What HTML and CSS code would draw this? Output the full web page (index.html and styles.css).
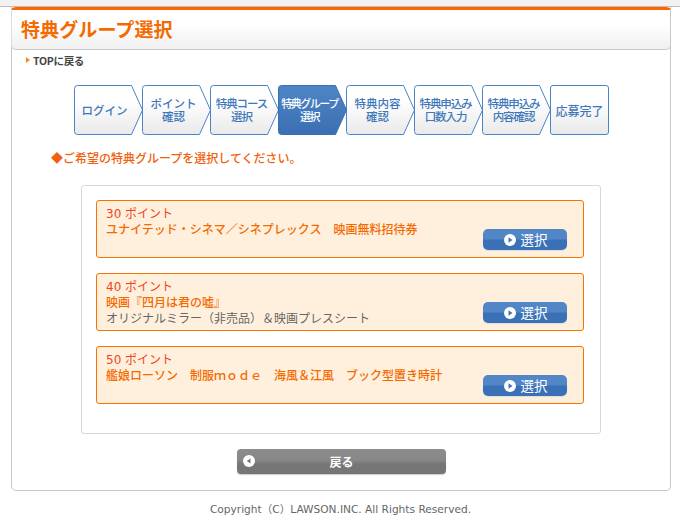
FILE: index.html
```html
<!DOCTYPE html>
<html lang="ja">
<head>
<meta charset="utf-8">
<title>特典グループ選択</title>
<link rel="stylesheet" href="styles.css">
</head>
<body>
<div class="topband"></div>
<main class="card">
  <header class="head"><h1>特典グループ選択</h1></header>
  <a class="toplink"><span class="tri"></span>TOPに戻る</a>
  <ol class="steps">
    <li class="step first"><svg class="shape" viewBox="0 0 70 50"><defs><linearGradient id="g" x1="0" y1="0" x2="0" y2="1"><stop offset="0.3" stop-color="#fff"/><stop offset="1" stop-color="#e9e9e9"/></linearGradient><linearGradient id="b" x1="0" y1="0" x2="0" y2="1"><stop offset="0" stop-color="#4f85c5"/><stop offset="1" stop-color="#3a70b3"/></linearGradient></defs><path class="p" d="M3.500.5H57.500L68.500 25 57.500 49.500H3.500Q.500 49.500.500 46.500V3.500Q.500.500 3.500.500Z"/></svg><span>ログイン</span></li>
    <li class="step"><svg class="shape" viewBox="0 0 70 50"><path class="p" d="M3.500.5H57.500L68.500 25 57.500 49.500H3.500Q.500 49.500.500 46.500V3.500Q.500.500 3.500.500Z"/></svg><span>ポイント<br>確認</span></li>
    <li class="step tight"><svg class="shape" viewBox="0 0 70 50"><path class="p" d="M3.500.5H57.500L68.500 25 57.500 49.500H3.500Q.500 49.500.500 46.500V3.500Q.500.500 3.500.500Z"/></svg><span>特典コース<br>選択</span></li>
    <li class="step on"><svg class="shape" viewBox="0 0 70 50"><path class="p" d="M3.500.5H57.500L68.500 25 57.500 49.500H3.500Q.500 49.500.500 46.500V3.500Q.500.500 3.500.500Z"/></svg><span>特典グループ<br>選択</span></li>
    <li class="step"><svg class="shape" viewBox="0 0 70 50"><path class="p" d="M3.500.5H57.500L68.500 25 57.500 49.500H3.500Q.500 49.500.500 46.500V3.500Q.500.500 3.500.500Z"/></svg><span>特典内容<br>確認</span></li>
    <li class="step tight"><svg class="shape" viewBox="0 0 70 50"><path class="p" d="M3.500.5H57.500L68.500 25 57.500 49.500H3.500Q.500 49.500.500 46.500V3.500Q.500.500 3.500.500Z"/></svg><span>特典申込み<br>口数入力</span></li>
    <li class="step tight"><svg class="shape" viewBox="0 0 70 50"><path class="p" d="M3.500.5H57.500L68.500 25 57.500 49.500H3.500Q.500 49.500.500 46.500V3.500Q.500.500 3.500.500Z"/></svg><span>特典申込み<br>内容確認</span></li>
    <li class="step last"><span>応募完了</span></li>
  </ol>
  <p class="lead">◆ご希望の特典グループを選択してください。</p>
  <section class="panel">
    <article class="item">
      <div class="pt">30 ポイント</div>
      <div class="name">ユナイテッド・シネマ／シネプレックス　映画無料招待券</div>
      <a class="sel"><svg class="ic" viewBox="0 0 12 12"><circle cx="6" cy="6" r="6" fill="#fff"/><path d="M4.500 3.300 8.500 6 4.500 8.700Z" fill="#3f75b8"/></svg>選択</a>
    </article>
    <article class="item">
      <div class="pt">40 ポイント</div>
      <div class="name">映画『四月は君の嘘』</div>
      <div class="sub">オリジナルミラー（非売品）＆映画プレスシート</div>
      <a class="sel"><svg class="ic" viewBox="0 0 12 12"><circle cx="6" cy="6" r="6" fill="#fff"/><path d="M4.500 3.300 8.500 6 4.500 8.700Z" fill="#3f75b8"/></svg>選択</a>
    </article>
    <article class="item">
      <div class="pt">50 ポイント</div>
      <div class="name">艦娘ローソン　制服ｍｏｄｅ　海風＆江風　ブック型置き時計</div>
      <a class="sel"><svg class="ic" viewBox="0 0 12 12"><circle cx="6" cy="6" r="6" fill="#fff"/><path d="M4.500 3.300 8.500 6 4.500 8.700Z" fill="#3f75b8"/></svg>選択</a>
    </article>
  </section>
  <a class="back"><svg class="bic" viewBox="0 0 12 12"><circle cx="6" cy="6" r="6" fill="#fff"/><path d="M7.500 3.500 3.800 6 7.500 8.500Z" fill="#777"/></svg>戻る</a>
</main>
<footer class="foot">Copyright（C）LAWSON.INC. All Rights Reserved.</footer>
</body>
</html>
```
FILE: styles.css
```css
* { box-sizing: border-box; }
html, body { margin: 0; padding: 0; }
body {
  width: 680px;
  height: 521px;
  overflow: hidden;
  background: #fff;
  font-family: "Noto Sans CJK JP", "Noto Sans", sans-serif;
  font-size: 12px;
  color: #555;
}
.topband { height: 7px; background: #f1f1f1; border-bottom: 1px solid #bdbdbd; }
.card {
  width: 660px;
  height: 484px;
  margin: 0 0 0 11px;
  border: 1px solid #c8c8c8;
  border-top: 0;
  border-radius: 0 0 5px 5px;
  display: flex;
  flex-direction: column;
  background: #fff;
}
.head {
  height: 43px;
  margin: 0 -1px;
  border-top: 3px solid #f60;
  border-bottom: 1px solid #c8c8c8;
  border-left: 1px solid #ddd;
  border-right: 1px solid #c8c8c8;
  border-radius: 5px 5px 5px 5px / 3px 3px 5px 5px;
  background: linear-gradient(#fff 35%, #f0f0f0);
  display: flex;
  align-items: center;
  padding-left: 9px;
}
.head h1 {
  margin: 0 0 1px;
  font-size: 19px;
  letter-spacing: 0.100px;
  line-height: 24px;
  font-weight: 700;
  color: #f46a00;
}
.toplink {
  display: flex;
  align-items: center;
  height: 20px;
  margin-left: 14px;
  font-size: 10.500px;
  font-weight: 700;
  letter-spacing: -0.300px;
  color: #444;
}
.tri {
  width: 0;
  height: 0;
  margin-right: 3px;
  border-left: 4px solid #f58a1f;
  border-top: 3px solid transparent;
  border-bottom: 3px solid transparent;
}
.steps {
  list-style: none;
  display: flex;
  margin: 15px 0 0 62px;
  padding: 0;
  height: 50px;
}
.step {
  position: relative;
  width: 68px;
  height: 50px;
  flex: none;
  display: flex;
  align-items: center;
  color: #3f78ba;
  font-size: 11.500px;
  font-weight: 500;
  line-height: 13px;
  text-align: center;
  white-space: nowrap;
}
.step span { position: relative; width: 63px; }
.step.first span { width: 61px; }
.tight span { letter-spacing: -1.100px; }
.shape { position: absolute; left: 0; top: 0; width: 70px; height: 50px; overflow: visible; }
.p { fill: url(#g); stroke: #4a84c8; stroke-width: 1; }
.on { color: #fff; z-index: 1; }
.on .p { fill: url(#b); stroke: #3a70b3; }
.on span { font-size: 11px; letter-spacing: -1.500px; }
.last {
  width: 59px;
  border: 1px solid #4a84c8;
  border-radius: 3px;
  background: linear-gradient(#fff 30%, #e9e9e9);
  justify-content: center;
}
.last span { width: auto; font-size: 12px; }
.lead {
  margin: 15px 0 0 39px;
  font-size: 12px;
  line-height: 16px;
  font-weight: 500;
  color: #f2600c;
}
.panel {
  width: 520px;
  height: 249px;
  margin: 19px 0 0 69px;
  border: 1px solid #d8d8d8;
  border-radius: 3px;
  padding: 14px;
  display: flex;
  flex-direction: column;
  gap: 15px;
  background: #fff;
}
.item {
  position: relative;
  width: 488px;
  height: 58px;
  flex: none;
  margin-left: 0;
  border: 1px solid #f87300;
  border-radius: 3px;
  background: #fff0de;
  padding: 5px 9px;
  font-family: "DejaVu Sans", "Noto Sans CJK JP", sans-serif;
  font-size: 12px;
  line-height: 16px;
}
.pt { color: #f0451c; }
.name { color: #f46a00; font-weight: 500; }
.sub { color: #666; }
.sel {
  position: absolute;
  left: 386px;
  top: 28px;
  width: 84px;
  height: 21px;
  border-radius: 5px;
  background: linear-gradient(#5286c6 0, #5286c6 45%, #3a71b6 55%, #3a71b6 100%);
  box-shadow: 0 1px 1px #ddd;
  color: #fff;
  font-family: "Noto Sans CJK JP", sans-serif;
  font-size: 13.500px;
  line-height: 21px;
  display: flex;
  align-items: center;
  justify-content: center;
  gap: 5px;
  padding-left: 1px;
}
.ic { width: 12px; height: 12px; }
.back {
  position: relative;
  width: 209px;
  height: 25px;
  margin: 15px 0 0 225px;
  border-radius: 4px;
  background: linear-gradient(#8c8c8c 0, #888 45%, #767676 60%, #767676 100%);
  box-shadow: 0 1px 1px #ccc;
  color: #fff;
  font-size: 12px;
  font-weight: 700;
  line-height: 25px;
  text-align: center;
}
.bic { position: absolute; left: 6px; top: 6px; width: 12px; height: 12px; }
.foot {
  margin-top: 10px;
  text-align: center;
  font-family: "DejaVu Sans", "Noto Sans CJK JP", sans-serif;
  font-size: 10.600px;
  line-height: 16px;
  color: #666;
  padding-left: 1px;
}
```
